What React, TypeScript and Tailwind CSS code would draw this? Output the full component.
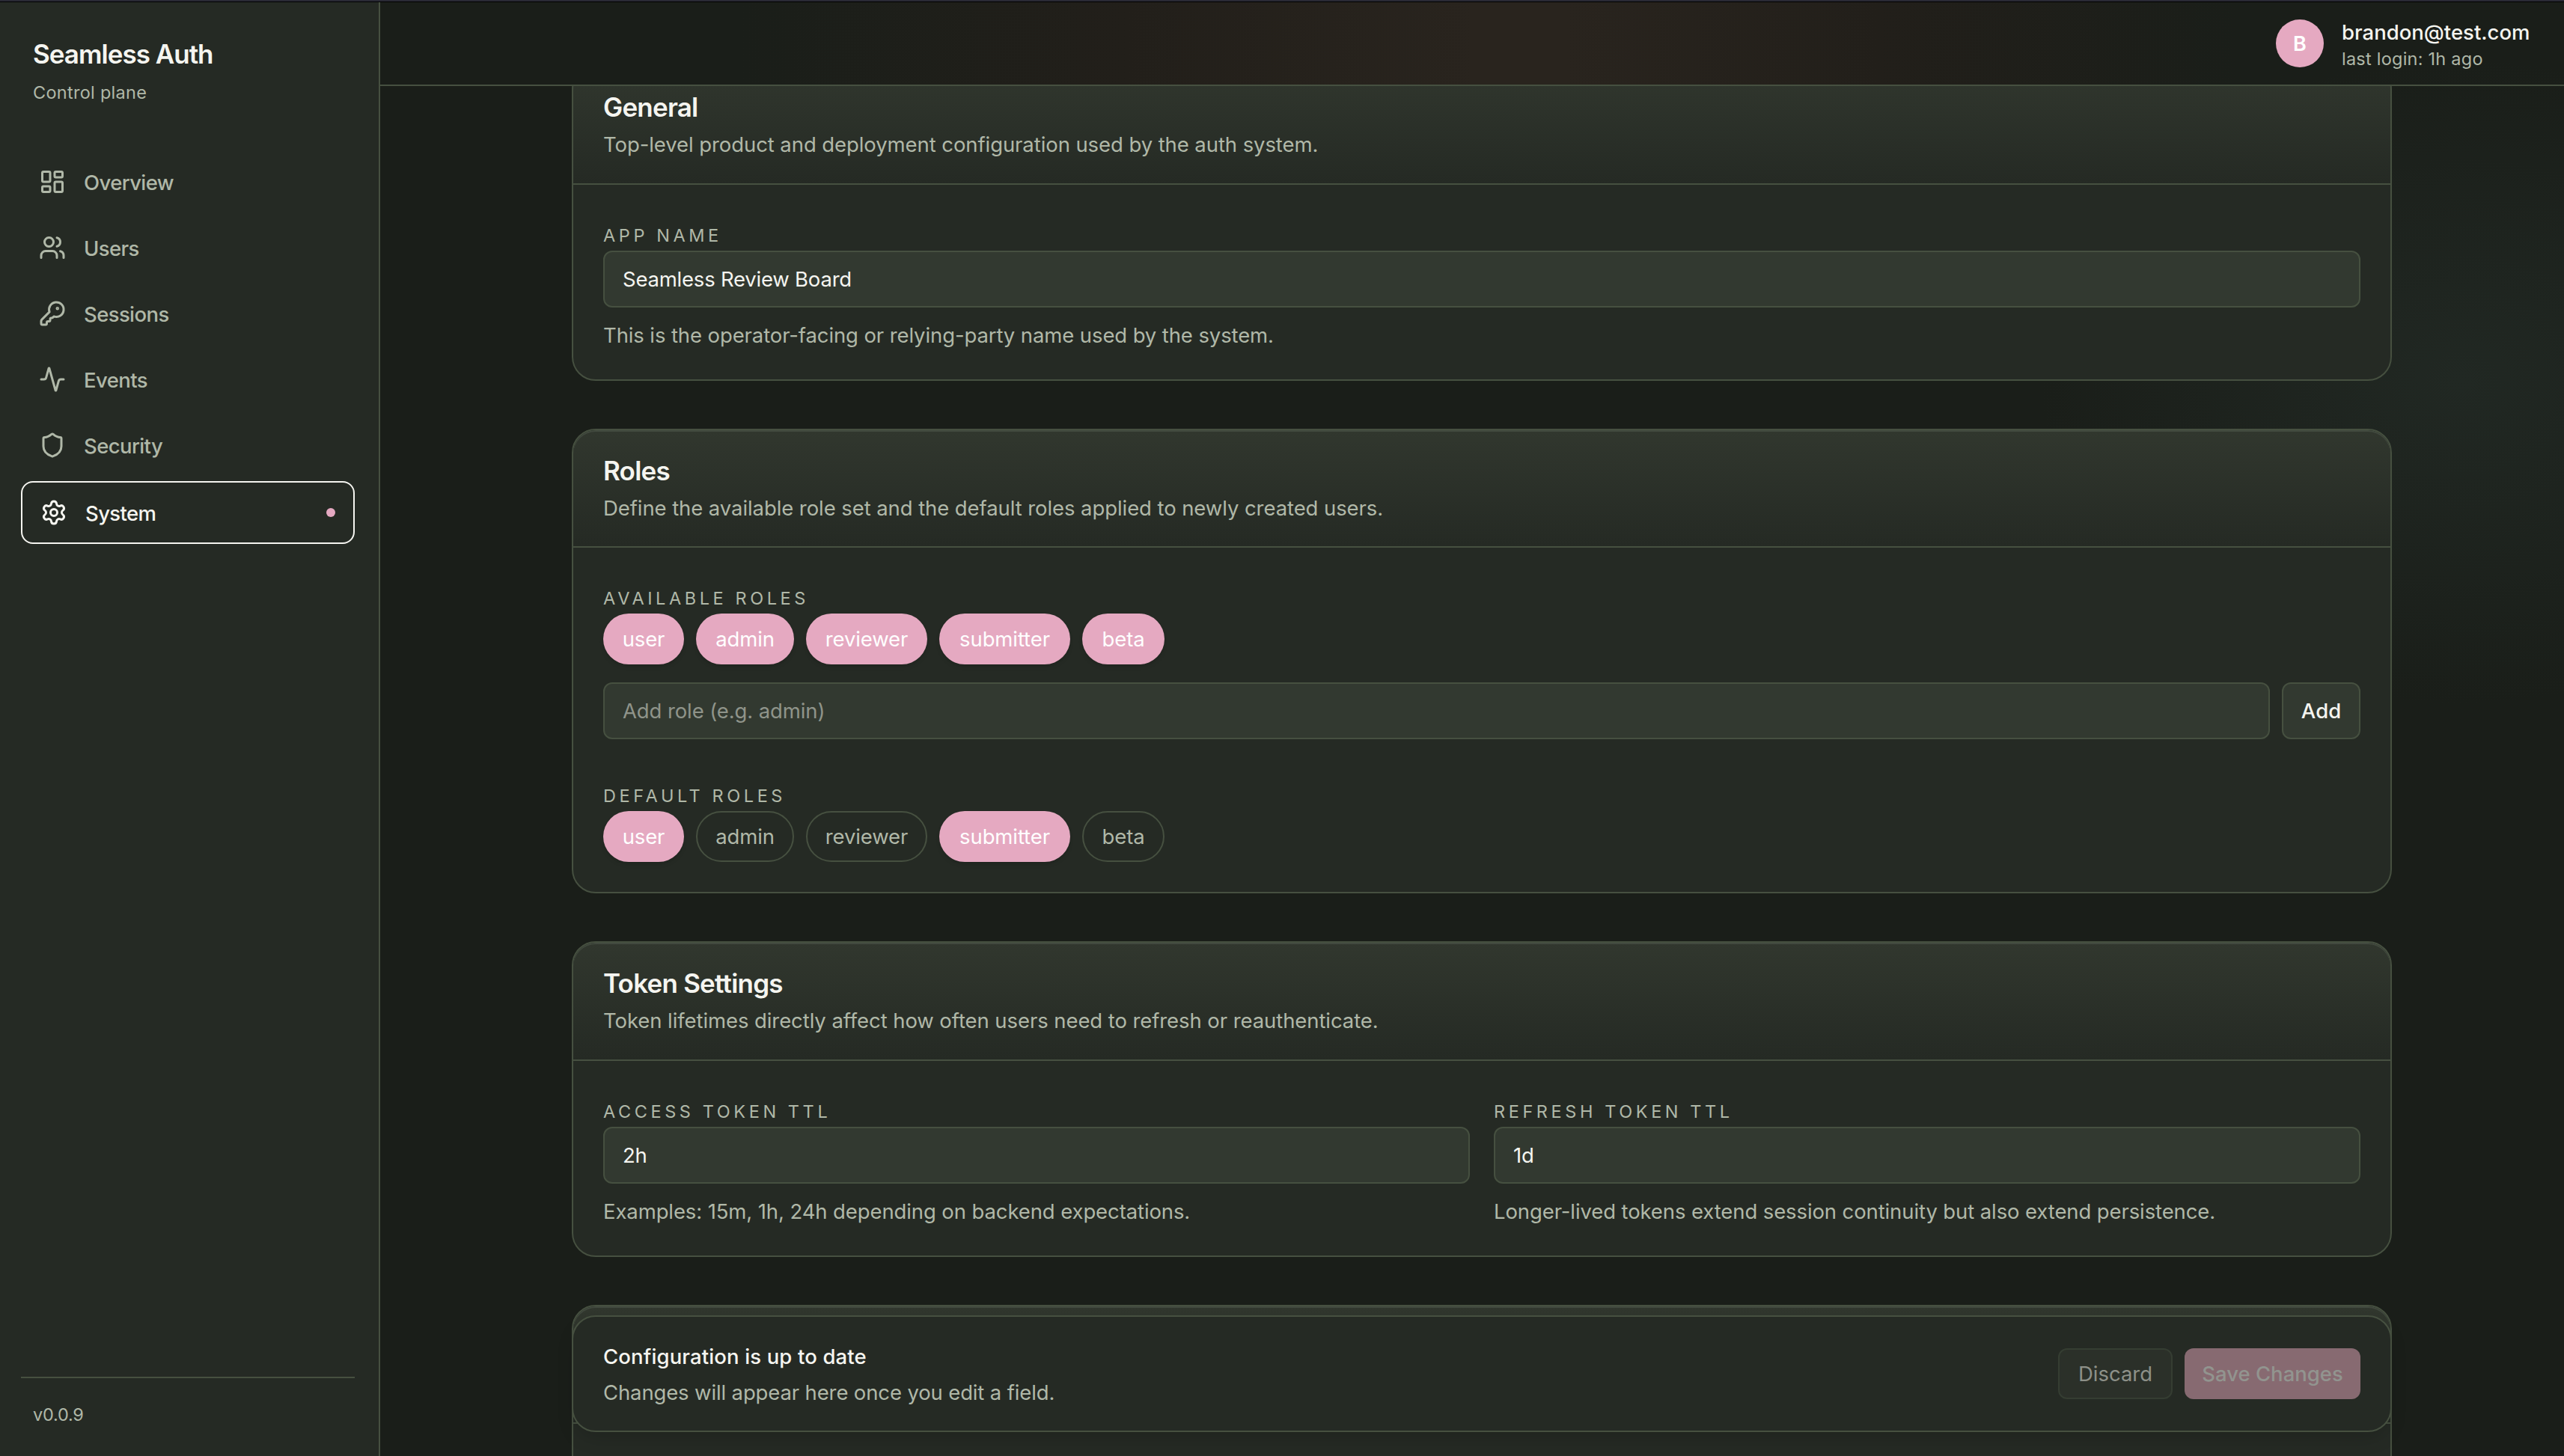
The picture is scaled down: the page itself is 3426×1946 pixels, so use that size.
import { Activity, KeyRound, LayoutDashboard, Settings, Shield, Users } from 'lucide-react'
import type { ReactNode } from 'react'

const NAV = [
  { label: 'Overview', icon: LayoutDashboard },
  { label: 'Users', icon: Users },
  { label: 'Sessions', icon: KeyRound },
  { label: 'Events', icon: Activity },
  { label: 'Security', icon: Shield },
  { label: 'System', icon: Settings, active: true },
]

const ROLES = [
  { name: 'user', width: 'w-[108px]', isDefault: true },
  { name: 'admin', width: 'w-[131px]', isDefault: false },
  { name: 'reviewer', width: 'w-[162px]', isDefault: false },
  { name: 'submitter', width: 'w-[175px]', isDefault: true },
  { name: 'beta', width: 'w-[110px]', isDefault: false },
]

function Sidebar() {
  return (
    <aside className="flex w-[508px] shrink-0 flex-col border-r-2 border-[#465040] bg-[#252a24] px-7 pt-[41px] pr-8 pb-[39px]">
      <div className="px-4">
        <div className="text-[35px] leading-[56px] font-semibold tracking-[-0.028em] text-[#f5f5f0]">
          Seamless Auth
        </div>
        <div className="mt-2 text-[23.5px] leading-8 tracking-[0.012em] text-[#b0b8a8]">Control plane</div>
      </div>

      <nav className="mt-[63px] flex flex-1 flex-col gap-2">
        {NAV.map(({ label, icon: Icon, active }) => (
          <a
            key={label}
            className={
              active
                ? 'flex h-21 items-center gap-6 rounded-[16px] border-2 border-[#f5f5f0] px-6 text-[#f5f5f0]'
                : 'flex h-20 items-center gap-6 px-6 text-[#b0b8a8]'
            }
          >
            <Icon size={36} />
            <span className="pt-0.5 text-[27.5px] leading-10 font-medium tracking-[-0.022em]">{label}</span>
            {active && <span className="ml-auto size-3 rounded-full bg-[#e5a9c1]" />}
          </a>
        ))}
      </nav>

      <div className="border-t-2 border-[#465040] px-4 pt-[33px] text-[23.5px] leading-8 tracking-[-0.01em] text-[#b0b8a8]">
        v0.0.9
      </div>
    </aside>
  )
}

function Header() {
  return (
    <header className="flex h-28 shrink-0 items-center justify-end gap-6 border-b-2 border-[#465040] bg-[linear-gradient(to_right,transparent_480px,#221f1a_1000px,#29241e_1460px,#29241e_1580px,#221f1a_2000px,transparent_2480px)] pr-12">
      <div className="flex size-16 items-center justify-center rounded-full bg-[#e5a9c1] pt-0.5 text-[27px] font-semibold text-white">
        B
      </div>
      <div className="w-[249px] pt-0.5 whitespace-nowrap">
        <div className="text-[27.5px] leading-10 font-medium text-[#f5f5f0]">brandon@test.com</div>
        <div className="text-[23.5px] leading-8 tracking-[0.01em] text-[#b0b8a8]">last login: 1h ago</div>
      </div>
    </header>
  )
}

function Card({ title, description, children }: { title?: string; description?: string; children?: ReactNode }) {
  return (
    <section className="overflow-hidden rounded-[32px] border-2 border-[#465040] bg-[#252a24]">
      <div className="h-[157.5px] rounded-t-[30px] border-b-2 border-[#465040] bg-linear-to-b from-[#31372e] to-[#252a24] px-10 pt-[26px] shadow-[inset_0_2px_0_#424a3f]">
        <h2 className="text-[35px] leading-[56px] font-semibold tracking-[-0.022em] text-[#f5f5f0]">{title}</h2>
        <p className="mt-0.5 text-[27.5px] leading-10 tracking-[-0.003em] text-[#b0b8a8]">{description}</p>
      </div>
      <div className="p-10">{children}</div>
    </section>
  )
}

function Label({ children }: { children: ReactNode }) {
  return (
    <div className="h-12 pt-3 text-[23.5px] leading-8 tracking-[0.195em] text-[#b0b8a8] uppercase">{children}</div>
  )
}

function Field({ label, value, help }: { label: string; value: string; help: string }) {
  return (
    <div className="flex-1">
      <Label>{label}</Label>
      <div className="flex h-19 items-center rounded-[12px] border-2 border-[#465040] bg-[#323930] px-6 pt-0.5 text-[27.5px] tracking-[-0.008em] text-[#f5f5f0]">
        {value}
      </div>
      <p className="mt-[17px] -mb-px text-[27.5px] leading-10 tracking-[-0.004em] text-[#b0b8a8]">{help}</p>
    </div>
  )
}

function RoleChips({ selected }: { selected: (isDefault: boolean) => boolean }) {
  return (
    <div className="flex gap-4">
      {ROLES.map((role) => (
        <span
          key={role.name}
          className={`flex h-17 items-center justify-center rounded-full pt-0.5 text-[27.5px] tracking-[-0.004em] ${role.width} ${
            selected(role.isDefault) ? 'bg-[#e5a9c1] text-white shadow-md' : 'border-2 border-[#465040] text-[#b0b8a8]'
          }`}
        >
          {role.name}
        </span>
      ))}
    </div>
  )
}

function SaveBar() {
  return (
    <div className="absolute top-[1643px] left-[256px] flex h-39 w-[2432px] items-center justify-between rounded-[32px] border-2 border-[#465040] bg-[#252a24] px-10 shadow-[0_12px_28px_-8px_rgba(0,0,0,0.2)]">
      <div className="pt-0.5">
        <div className="text-[27.5px] leading-10 font-medium tracking-[0.005em] text-[#f5f5f0]">
          Configuration is up to date
        </div>
        <div className="mt-2 text-[27.5px] leading-10 tracking-[-0.005em] text-[#b0b8a8]">
          Changes will appear here once you edit a field.
        </div>
      </div>
      <div className="flex gap-4 text-[27.5px]">
        <button className="h-17 w-[153px] rounded-[12px] border-2 border-[#353d32] bg-[#2b3029] pt-0.5 text-[#8d9088]">
          Discard
        </button>
        <button className="h-17 w-[235px] rounded-[12px] bg-[#876a71] pt-0.5 font-medium text-[#92948f]">
          Save Changes
        </button>
      </div>
    </div>
  )
}

export default function App() {
  return (
    <div className="flex h-[1946px] w-[3426px] flex-col overflow-hidden bg-[#1a1e19] font-['Inter',sans-serif]">
      <div className="h-[3px] shrink-0 border-b border-black bg-[#2a2a35]" />
      <div className="flex min-h-0 flex-1">
        <Sidebar />
        <div className="relative flex min-w-0 flex-1 flex-col bg-[radial-gradient(ellipse_560px_430px_at_2780px_507px,#212823,transparent)]">
          <Header />
          <main className="relative min-h-0 flex-1 overflow-hidden">
            <div className="-mt-7 ml-[256px] flex w-[2432px] flex-col gap-16">
              <Card title="General" description="Top-level product and deployment configuration used by the auth system.">
                <Field
                  label="App Name"
                  value="Seamless Review Board"
                  help="This is the operator-facing or relying-party name used by the system."
                />
              </Card>

              <Card title="Roles" description="Define the available role set and the default roles applied to newly created users.">
                <Label>Available Roles</Label>
                <RoleChips selected={() => true} />
                <div className="mt-6 mb-12 flex gap-4">
                  <div className="flex h-19 flex-1 items-center rounded-[12px] border-2 border-[#465040] bg-[#323930] px-6 pt-0.5 text-[27.5px] tracking-[-0.004em] text-[#8f948a]">
                    Add role (e.g. admin)
                  </div>
                  <button className="h-19 w-[105px] rounded-[12px] border-2 border-[#465040] bg-[#323930] pt-0.5 text-[27.5px] font-medium text-[#f5f5f0]">
                    Add
                  </button>
                </div>
                <Label>Default Roles</Label>
                <RoleChips selected={(isDefault) => isDefault} />
              </Card>

              <Card
                title="Token Settings"
                description="Token lifetimes directly affect how often users need to refresh or reauthenticate."
              >
                <div className="flex gap-8">
                  <Field label="Access Token TTL" value="2h" help="Examples: 15m, 1h, 24h depending on backend expectations." />
                  <Field
                    label="Refresh Token TTL"
                    value="1d"
                    help="Longer-lived tokens extend session continuity but also extend persistence."
                  />
                </div>
              </Card>

              <Card />
            </div>
            <SaveBar />
          </main>
        </div>
      </div>
    </div>
  )
}
